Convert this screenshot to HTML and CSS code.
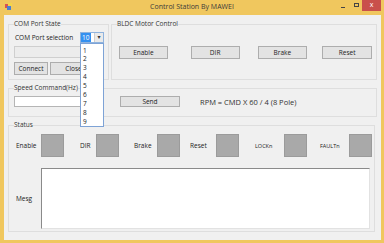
FILE: index.html
```html
<!DOCTYPE html>
<html lang="en">

<head>
    <meta charset="UTF-8">
    <meta name="viewport" content="width=device-width, initial-scale=1.0">
    <title>Control Station By MAWEI</title>
    <link rel="stylesheet" href="styles.css">
</head>

<body>
    <div class="window">
        <!-- title bar -->
        <div class="titlebar">
            <svg class="app-icon" width="7" height="7" viewBox="0 0 7 7">
                <rect x="0" y="1" width="4" height="4" fill="#d9534f"/>
                <rect x="3" y="0" width="4" height="3" fill="#f5d44a"/>
                <rect x="2" y="3" width="4" height="4" fill="#4a7fd0"/>
            </svg>
            <div class="title">Control Station By MAWEI</div>
            <div class="caption-btns">
                <span class="cap-min"></span>
                <span class="cap-max"></span>
                <span class="cap-close">x</span>
            </div>
        </div>

        <div class="client">
            <div class="top-row">
                <fieldset class="group com-group">
                    <legend>COM Port State</legend>
                    <div class="port-row">
                        <span class="port-label">COM Port selection</span>
                        <div class="combo">
                            <span class="combo-value">10</span>
                            <span class="combo-arrow">&#9662;</span>
                            <ul class="combo-list">
                                <li>1</li>
                                <li>2</li>
                                <li>3</li>
                                <li>4</li>
                                <li>5</li>
                                <li>6</li>
                                <li>7</li>
                                <li>8</li>
                                <li>9</li>
                            </ul>
                        </div>
                    </div>
                    <div class="port-status"></div>
                    <div class="port-btns">
                        <button class="btn btn-connect">Connect</button>
                        <button class="btn btn-close">Close</button>
                    </div>
                </fieldset>

                <fieldset class="group motor-group">
                    <legend>BLDC Motor Control</legend>
                    <div class="motor-btns">
                        <button class="btn motor-btn">Enable</button>
                        <button class="btn motor-btn">DIR</button>
                        <button class="btn motor-btn">Brake</button>
                        <button class="btn motor-btn">Reset</button>
                    </div>
                </fieldset>
            </div>

            <fieldset class="group speed-group">
                <legend>Speed Command(Hz)</legend>
                <div class="speed-row">
                    <input type="text" class="speed-input">
                    <button class="btn btn-send">Send</button>
                    <span class="rpm">RPM = CMD X 60 / 4 (8 Pole)</span>
                </div>
            </fieldset>

            <fieldset class="group status-group">
                <legend>Status</legend>
                <div class="leds">
                    <div class="led-item led-enable"><span>Enable</span><div class="led"></div></div>
                    <div class="led-item led-dir"><span>DIR</span><div class="led"></div></div>
                    <div class="led-item led-brake"><span>Brake</span><div class="led"></div></div>
                    <div class="led-item led-reset"><span>Reset</span><div class="led"></div></div>
                    <div class="led-item led-lock"><span>LOCKn</span><div class="led"></div></div>
                    <div class="led-item led-fault"><span>FAULTn</span><div class="led"></div></div>
                </div>
                <div class="mesg-row">
                    <span class="mesg-label">Mesg</span>
                    <div class="mesg-box"></div>
                </div>
            </fieldset>
        </div>
    </div>
</body>

</html>
```

FILE: styles.css
```css
* {
    box-sizing: border-box;
}

body {
    margin: 0;
    font-family: "Open Sans", "DejaVu Sans", sans-serif;
    font-size: 6.5px;
    color: #222;
}

.window {
    width: 384px;
    height: 243px;
    background-color: #f0c75e;
    display: flex;
    flex-direction: column;
}

/* title bar */
.titlebar {
    height: 15px;
    display: grid;
    grid-template-columns: 1fr auto 1fr;
    align-items: start;
}

.app-icon {
    margin: 3px 0 0 5px;
}

.title {
    font-size: 7px;
    line-height: 14px;
    color: #3a3a3a;
}

.caption-btns {
    display: flex;
    justify-content: flex-end;
    align-items: flex-start;
    margin-right: 3px;
}

.cap-min {
    width: 4px;
    height: 1px;
    background-color: #444;
    margin: 7px 9px 0 0;
}

.cap-max {
    width: 5px;
    height: 4px;
    border: 1px solid #444;
    border-top-width: 1.5px;
    margin: 3px 3px 0 0;
}

.cap-close {
    width: 19px;
    height: 11px;
    background-color: #c9504b;
    color: #fff;
    font-size: 7px;
    line-height: 10px;
    text-align: center;
}

.client {
    flex: 1;
    margin: 0 3px 3px 4px;
    background-color: #f0f0f0;
    padding: 5px 0 0 4px;
}

/* group boxes */
.group {
    margin: 0;
    border: 1px solid #dedede;
    padding: 0 4px 0 5px;
    min-width: 0;
}

.group legend {
    padding: 0;
    line-height: 8px;
    color: #333;
}

.top-row {
    display: flex;
    gap: 2px;
}

.com-group {
    width: 101px;
    height: 60px;
}

.motor-group {
    width: 266px;
    height: 60px;
}

.port-row {
    display: flex;
    align-items: center;
    margin-top: 4px;
    height: 11px;
}

.port-label {
    width: 66px;
    padding-left: 1px;
}

.combo {
    position: relative;
    width: 24px;
    height: 11px;
    background-color: #fff;
    border: 1px solid #8fb3de;
    display: flex;
    z-index: 2;
}

.combo-value {
    width: 10px;
    background-color: #3390f0;
    color: #fff;
    line-height: 9px;
    padding-left: 1px;
}

.combo-arrow {
    margin-left: auto;
    width: 9px;
    border-left: 1px solid #d0d0d0;
    background-color: #eaeaea;
    font-size: 6px;
    line-height: 9px;
    text-align: center;
    color: #333;
}

.combo-list {
    position: absolute;
    top: 10px;
    left: -1px;
    width: 24px;
    height: 84px;
    margin: 0;
    padding: 2.5px 0 0 2px;
    list-style: none;
    background-color: #fff;
    border: 1px solid #7ea3d6;
}

.combo-list li {
    line-height: 8.9px;
}

.port-status {
    width: 83px;
    height: 12px;
    margin-top: 3px;
    background-color: #ececec;
    border: 1px solid #cfcfcf;
}

.port-btns {
    display: flex;
    gap: 2px;
    margin-top: 4px;
}

/* buttons */
.btn {
    height: 13px;
    padding: 0;
    font-family: inherit;
    font-size: 6.5px;
    color: #222;
    background-color: #e3e3e3;
    border: 1px solid #adadad;
    border-radius: 0;
}

.btn-connect {
    width: 34px;
}

.btn-close {
    width: 47px;
}

.motor-btns {
    display: flex;
    margin-top: 18px;
    padding-left: 2px;
}

.motor-btn {
    width: 49px;
}

.motor-btn:nth-child(2) {
    margin-left: 23px;
}

.motor-btn:nth-child(3) {
    width: 50px;
    margin-left: 18px;
}

.motor-btn:nth-child(4) {
    width: 50px;
    margin-left: 15px;
}

.speed-group {
    width: 369px;
    height: 33px;
    margin-top: 4px;
}

.speed-row {
    display: flex;
    align-items: center;
    margin-top: 4px;
}

.speed-input {
    width: 70px;
    height: 11px;
    border: 1px solid #b5b5b5;
    background-color: #fff;
    padding: 0;
}

.btn-send {
    width: 60px;
    height: 11px;
    margin-left: 36px;
}

.rpm {
    margin-left: 20px;
    font-size: 7.5px;
    color: #333;
}

.status-group {
    width: 367px;
    height: 111px;
    margin-top: 4px;
}

.leds {
    display: flex;
    margin-top: 5px;
    padding-left: 2px;
}

.led-item {
    display: flex;
    align-items: center;
}

.led-item span {
    display: inline-block;
}

.led {
    width: 23px;
    height: 23px;
    background-color: #a9a9a9;
    border: 1px solid #9b9b9b;
}

.led-enable span { width: 25px; }
.led-dir span { width: 16px; }
.led-brake span { width: 23px; }
.led-reset span { width: 26px; }
.led-lock span { width: 29px; font-size: 5.5px; }
.led-fault span { width: 29px; font-size: 5.5px; }

.led-enable { margin-right: 16px; }
.led-dir { margin-right: 15px; }
.led-brake { margin-right: 10px; }
.led-reset { margin-right: 16px; }
.led-lock { margin-right: 13px; }

.mesg-row {
    display: flex;
    align-items: center;
    margin-top: 11px;
    padding-left: 2px;
}

.mesg-label {
    width: 25px;
}

.mesg-box {
    width: 331px;
    height: 61px;
    background-color: #fff;
    border: 1px solid #e2e2e2;
    border-top-color: #8a8a8a;
    border-left-color: #8a8a8a;
}
```
